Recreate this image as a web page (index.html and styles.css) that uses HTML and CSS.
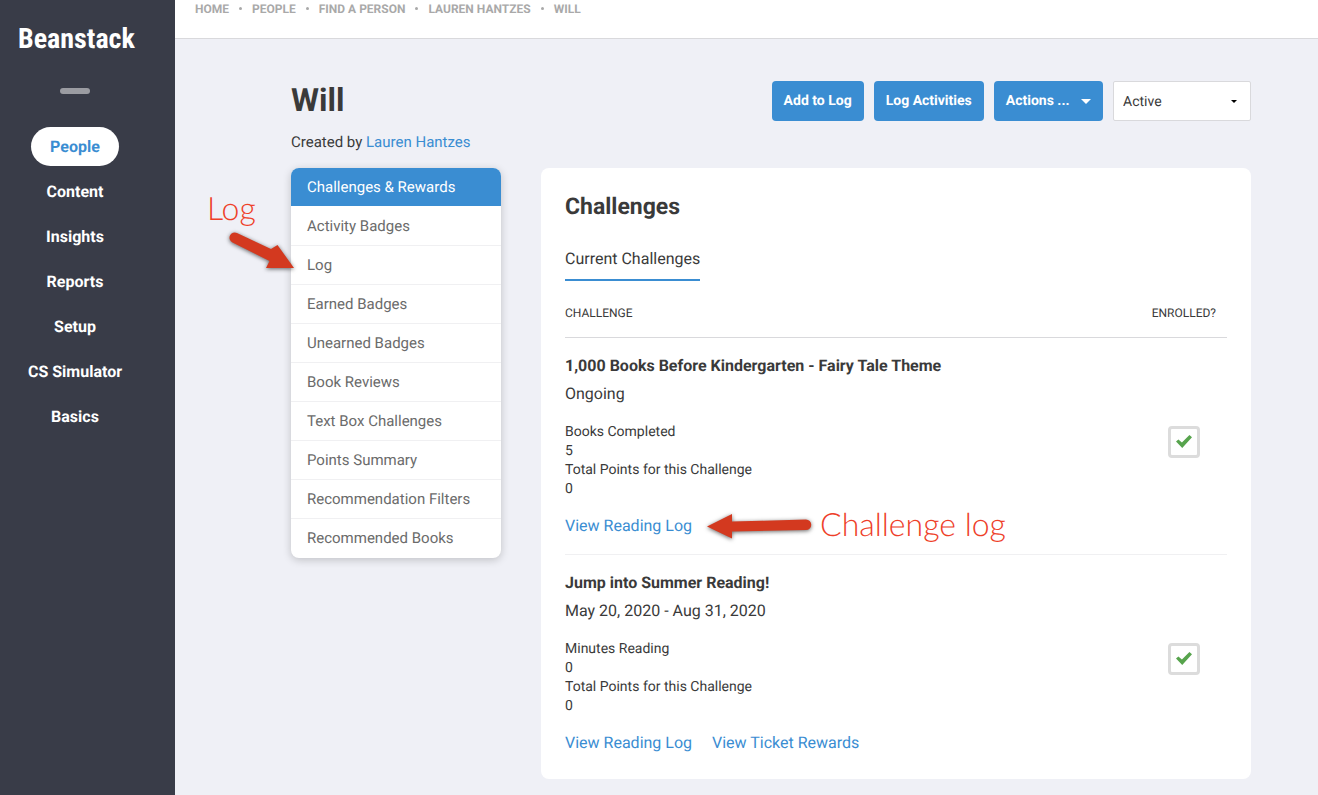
FILE: index.html
```html
<!DOCTYPE html>
<html lang="en">
<head>
<meta charset="utf-8">
<title>Will - Beanstack</title>
<link rel="stylesheet" href="styles.css">
</head>
<body>
<div class="app">
  <aside class="sidebar">
    <a class="logo" href="#">Beanstack</a>
    <span class="handle"></span>
    <nav class="main-nav">
      <a class="active" href="#">People</a>
      <a href="#">Content</a>
      <a href="#">Insights</a>
      <a href="#">Reports</a>
      <a href="#">Setup</a>
      <a href="#">CS Simulator</a>
      <a href="#">Basics</a>
    </nav>
  </aside>
  <div class="page">
    <nav class="crumbs" aria-label="Breadcrumb">
      <a href="#">HOME</a><i></i><a href="#">PEOPLE</a><i></i><a href="#">FIND A PERSON</a><i></i><a href="#">LAUREN HANTZES</a><i></i><a href="#">WILL</a>
    </nav>
    <main class="content">
      <header class="profile">
        <h1>Will</h1>
        <div class="actions">
          <button class="btn" type="button">Add to Log</button>
          <button class="btn" type="button">Log Activities</button>
          <button class="btn" type="button">Actions ... <span class="caret"></span></button>
          <div class="status">
            <select aria-label="Status"><option>Active</option></select>
            <span class="caret caret-dark"></span>
          </div>
        </div>
      </header>
      <p class="created">Created by <a href="#">Lauren Hantzes</a></p>
      <div class="columns">
        <nav class="side-menu">
          <a class="current" href="#">Challenges &amp; Rewards</a>
          <a href="#">Activity Badges</a>
          <a href="#">Log</a>
          <a href="#">Earned Badges</a>
          <a href="#">Unearned Badges</a>
          <a href="#">Book Reviews</a>
          <a href="#">Text Box Challenges</a>
          <a href="#">Points Summary</a>
          <a href="#">Recommendation Filters</a>
          <a href="#">Recommended Books</a>
        </nav>
        <section class="card">
          <h2>Challenges</h2>
          <a class="tab" href="#">Current Challenges</a>
          <table class="challenges">
            <thead>
              <tr><th>CHALLENGE</th><th class="enrolled">ENROLLED?</th></tr>
            </thead>
            <tbody>
              <tr>
                <td>
                  <h3>1,000 Books Before Kindergarten - Fairy Tale Theme</h3>
                  <p class="dates">Ongoing</p>
                  <p class="stats">Books Completed<br>5<br>Total Points for this Challenge<br>0</p>
                  <p class="links"><a href="#">View Reading Log</a></p>
                </td>
                <td class="enrolled"><input type="checkbox" checked aria-label="Enrolled in 1,000 Books Before Kindergarten"></td>
              </tr>
              <tr>
                <td>
                  <h3>Jump into Summer Reading!</h3>
                  <p class="dates">May 20, 2020 - Aug 31, 2020</p>
                  <p class="stats">Minutes Reading<br>0<br>Total Points for this Challenge<br>0</p>
                  <p class="links"><a href="#">View Reading Log</a><a href="#">View Ticket Rewards</a></p>
                </td>
                <td class="enrolled"><input type="checkbox" checked aria-label="Enrolled in Jump into Summer Reading"></td>
              </tr>
            </tbody>
          </table>
        </section>
      </div>
    </main>
  </div>
  <span class="note note-log">Log</span>
  <svg class="arrow arrow-log" width="80" height="50" viewBox="0 0 80 50" aria-hidden="true">
    <path d="M12 3L46 19L52.500 15L69 38L41 38L44.500 31L7.500 12.500A5.200 5.200 0 0 1 12 3Z"/>
  </svg>
  <span class="note note-challenge">Challenge log</span>
  <svg class="arrow arrow-challenge" width="120" height="40" viewBox="0 0 120 40" aria-hidden="true">
    <path d="M7 21.500L32 9V16.500L106 14.500A5 5 0 0 1 106 25L32 26.500V33.500Z"/>
  </svg>
</div>
</body>
</html>
```
FILE: styles.css
```css
* { box-sizing: border-box; }
body {
  margin: 0;
  background: #eff0f6;
  color: #3a3a3a;
  font: 16px/20px Roboto, sans-serif;
  text-rendering: geometricPrecision;
}
a { color: #3a8dd2; text-decoration: none; }
h1, h2, h3, p { margin: 0; }
.app { position: relative; display: flex; min-height: 100vh; }

.sidebar {
  flex: 0 0 175px;
  display: flex;
  flex-direction: column;
  align-items: center;
  padding: 18px 25px 0 0;
  background: #393c48;
}
.logo {
  align-self: flex-start;
  margin-left: 18px;
  color: #fff;
  font: bold 28px/42px "Roboto Condensed", "Liberation Sans Narrow", sans-serif;
}
.handle { width: 30px; height: 6px; margin-top: 28px; border-radius: 3px; background: #9b9ca2; }
.main-nav { display: flex; flex-direction: column; align-items: center; gap: 6px; margin-top: 33px; }
.main-nav a { padding: 0 19px; border-radius: 20px; color: #fff; font-weight: bold; line-height: 39px; white-space: nowrap; }
.main-nav .active { background: #fff; color: #3a8dd2; }

.page { flex: 1; min-width: 0; }
.crumbs {
  display: flex;
  align-items: center;
  height: 39px;
  padding: 0 20px 21px;
  background: #fff;
  border-bottom: 1px solid #d9d9dc;
}
.crumbs a { color: #a9a9a9; font-weight: bold; font-size: 12px; }
.crumbs i { width: 3px; height: 3px; margin: 0 10px; border-radius: 50%; background: #a9a9a9; }

.content { padding: 42px 67px 16px 116px; }
.profile { display: flex; justify-content: space-between; align-items: flex-start; }
h1 { font-size: 32px; line-height: 38px; }
.actions { display: flex; gap: 10px; }
.btn {
  height: 40px;
  padding: 0 12px;
  border: 0;
  border-radius: 4px;
  background: #3a8dd2;
  color: #fff;
  font: bold 14px/20px Roboto, sans-serif;
  text-rendering: inherit;
  white-space: nowrap;
}
.caret { display: inline-block; margin-left: 8px; border: 5px solid transparent; border-top-color: #fff; border-bottom: 0; vertical-align: 1px; }
.status { display: flex; align-items: center; width: 138px; height: 40px; padding-right: 13px; background: #fff; border: 1px solid #d9d9dc; border-radius: 2px; }
.status select { flex: 1; height: 38px; padding: 2px 9px 0; border: 0; background: none; color: #3a3a3a; font: 14px/20px Roboto, sans-serif; text-rendering: inherit; appearance: none; }
.caret-dark { border-width: 3px 3px 0; border-top-color: #000; }
.created { margin-top: 11px; font-size: 15px; }

.columns { display: flex; align-items: flex-start; gap: 40px; margin-top: 16px; }
.side-menu { flex: 0 0 210px; overflow: hidden; border-radius: 8px; background: #fff; box-shadow: 0 2px 8px rgba(0, 0, 0, 0.2); }
.side-menu a { display: block; height: 39px; padding-left: 16px; border-bottom: 1px solid #f0f0f2; color: #6b6b6b; font-size: 15px; line-height: 38px; }
.side-menu a:last-child { border-bottom: 0; }
.side-menu .current { background: #3a8dd2; border-bottom-color: #fff; background-clip: padding-box; color: #fff; }

.card { flex: 1; padding: 24px; border-radius: 8px; background: #fff; }
h2 { font-size: 23px; line-height: 30px; }
.tab { display: inline-block; margin-top: 27px; padding-bottom: 10px; border-bottom: 2px solid #3a8dd2; color: #3a3a3a; line-height: 20px; }
.challenges { width: 100%; border-collapse: collapse; margin-top: 16px; }
th { height: 40px; padding: 0 0 8px; border-bottom: 1px solid #d9d9dc; font-weight: normal; font-size: 12px; line-height: 16px; text-align: left; }
td { padding: 18px 0; vertical-align: top; }
tbody tr + tr td { border-top: 1px solid #f0f0f2; }
tbody tr:last-child td { padding-bottom: 2px; }
th.enrolled { width: 86px; padding-right: 11px; text-align: right; }
td.enrolled { padding-right: 27px; text-align: right; vertical-align: top; }
h3 { font-size: 16px; line-height: 20px; }
.dates { margin-top: 8px; }
.stats { margin-top: 19px; font-size: 14px; line-height: 19px; }
.links { display: flex; gap: 20px; margin-top: 17px; }
input[type="checkbox"] { appearance: none; display: inline-grid; place-items: center; width: 32px; height: 32px; margin: 70px 0 0; border: 3px solid #dcdcdc; border-radius: 4px; background: #fff; }
input[type="checkbox"]:checked::before { content: ""; width: 16px; height: 13px; background: #57a44d; clip-path: polygon(0 50%, 15% 35%, 37% 58%, 84% 0, 100% 17%, 39% 100%); }

.note { position: absolute; color: #ee4029; font: 300 32px/38px Lato, sans-serif; white-space: nowrap; }
.note-log { left: 207px; top: 189px; }
.note-challenge { left: 820px; top: 505px; }
.arrow { position: absolute; fill: #d3391f; filter: drop-shadow(0 1px 2px rgba(0, 0, 0, 0.6)); }
.arrow-log { left: 225px; top: 230px; }
.arrow-challenge { left: 700px; top: 505px; }
```
